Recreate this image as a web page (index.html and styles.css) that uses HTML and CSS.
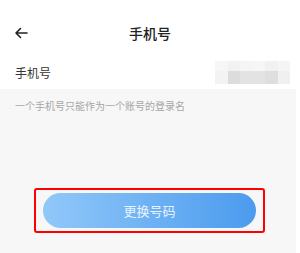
FILE: index.html
```html
<!DOCTYPE html>
<html lang="zh-CN">
<head>
  <meta charset="UTF-8" />
  <meta name="viewport" content="width=device-width, initial-scale=1.0" />
  <title>手机号</title>
  <link rel="stylesheet" href="styles.css">
</head>
<body>
  <div class="page">
    <!-- Top bar -->
    <div class="top-bar">
      <svg class="back-icon" width="14" height="12" viewBox="0 0 14 12">
        <path d="M13 6H2M6.5 1.5L2 6l4.5 4.5" fill="none" stroke="#222" stroke-width="1.6" stroke-linecap="round" stroke-linejoin="round"/>
      </svg>
      <span class="title">手机号</span>
    </div>

    <!-- Phone row -->
    <div class="phone-row">
      <span class="phone-label">手机号</span>
      <div class="phone-blur">
        <i style="background:#f6f6f6"></i><i style="background:#f2f2f2"></i><i style="background:#f5f5f5"></i><i style="background:#f6f6f6"></i><i style="background:#f1f1f1"></i><i style="background:#f5f5f5"></i>
        <i style="background:#f3f3f3"></i><i style="background:#dcdcdc"></i><i style="background:#e3e3e3"></i><i style="background:#e3e3e3"></i><i style="background:#dedede"></i><i style="background:#f0f0f0"></i>
      </div>
    </div>

    <!-- Hint and action -->
    <div class="content">
      <p class="hint">一个手机号只能作为一个账号的登录名</p>
      <div class="action-frame">
        <button class="change-btn">更换号码</button>
      </div>
    </div>
  </div>
</body>
</html>
```

FILE: styles.css
```css
body {
  margin: 0;
  background-color: #fff;
  font-family: "Noto Sans CJK SC", "Noto Sans", sans-serif;
  color: #222;
  overflow: hidden;
}
.page {
  width: 300px;
  height: 253px;
  display: flex;
  flex-direction: column;
}
.top-bar {
  position: relative;
  height: 50px;
  display: flex;
  align-items: center;
  justify-content: center;
  padding-top: 16px;
  box-sizing: border-box;
}
.back-icon {
  position: absolute;
  left: 14px;
  top: 27px;
}
.title {
  font-size: 14px;
  font-weight: 500;
  color: #222;
}
.phone-row {
  height: 39px;
  display: flex;
  align-items: center;
  justify-content: space-between;
  padding: 0 10px 0 15px;
}
.phone-label {
  font-size: 12px;
  color: #333;
  margin-top: 6px;
}
.phone-blur {
  display: grid;
  grid-template-columns: repeat(6, 12.5px);
  grid-template-rows: 10px 13px;
  margin-top: 6px;
}
.content {
  flex: 1;
  width: 296px;
  background-color: #f7f7f7;
  display: flex;
  flex-direction: column;
}
.hint {
  margin: 10px 0 0 15px;
  font-size: 10px;
  color: #a6a6a6;
  line-height: 14px;
}
.action-frame {
  margin: 75px 0 0 34px;
  width: 227px;
  height: 41px;
  border: 2px solid #f00;
  border-radius: 3px;
  display: flex;
  align-items: center;
  justify-content: center;
}
.change-btn {
  width: 213px;
  height: 35px;
  border: none;
  border-radius: 18px;
  background: linear-gradient(90deg, #91c8f9, #4b9bee);
  color: #e8f3ff;
  font-family: inherit;
  font-size: 13px;
  padding: 0;
}
```
